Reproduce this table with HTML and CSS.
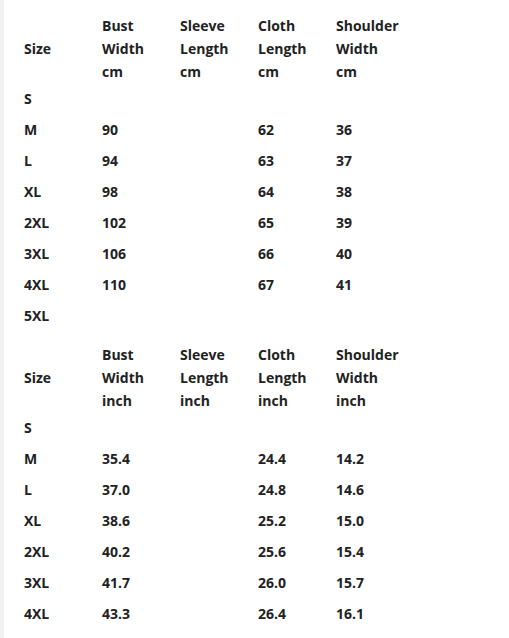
FILE: index.html
```html
<!DOCTYPE html>
<html>
<head>
<meta charset="utf-8">
<link rel="stylesheet" href="styles.css">
</head>
<body>
<div class="page">
  <table class="sizes">
    <colgroup><col class="c"><col class="c"><col class="c"><col class="c"><col class="c"></colgroup>
    <thead>
      <tr><th>Size</th><th>Bust<br>Width<br>cm</th><th>Sleeve<br>Length<br>cm</th><th>Cloth<br>Length<br>cm</th><th>Shoulder<br>Width<br>cm</th></tr>
    </thead>
    <tbody>
      <tr><td>S</td><td></td><td></td><td></td><td></td></tr>
      <tr><td>M</td><td>90</td><td></td><td>62</td><td>36</td></tr>
      <tr><td>L</td><td>94</td><td></td><td>63</td><td>37</td></tr>
      <tr><td>XL</td><td>98</td><td></td><td>64</td><td>38</td></tr>
      <tr><td>2XL</td><td>102</td><td></td><td>65</td><td>39</td></tr>
      <tr><td>3XL</td><td>106</td><td></td><td>66</td><td>40</td></tr>
      <tr><td>4XL</td><td>110</td><td></td><td>67</td><td>41</td></tr>
      <tr><td>5XL</td><td></td><td></td><td></td><td></td></tr>
    </tbody>
  </table>
  <table class="sizes second">
    <colgroup><col class="c"><col class="c"><col class="c"><col class="c"><col class="c"></colgroup>
    <thead>
      <tr><th>Size</th><th>Bust<br>Width<br>inch</th><th>Sleeve<br>Length<br>inch</th><th>Cloth<br>Length<br>inch</th><th>Shoulder<br>Width<br>inch</th></tr>
    </thead>
    <tbody>
      <tr><td>S</td><td></td><td></td><td></td><td></td></tr>
      <tr><td>M</td><td>35.4</td><td></td><td>24.4</td><td>14.2</td></tr>
      <tr><td>L</td><td>37.0</td><td></td><td>24.8</td><td>14.6</td></tr>
      <tr><td>XL</td><td>38.6</td><td></td><td>25.2</td><td>15.0</td></tr>
      <tr><td>2XL</td><td>40.2</td><td></td><td>25.6</td><td>15.4</td></tr>
      <tr><td>3XL</td><td>41.7</td><td></td><td>26.0</td><td>15.7</td></tr>
      <tr><td>4XL</td><td>43.3</td><td></td><td>26.4</td><td>16.1</td></tr>
    </tbody>
  </table>
</div>
</body>
</html>
```
FILE: styles.css
```css
html, body {
  margin: 0;
  padding: 0;
  background: #ffffff;
}
.page {
  border-left: 4px solid #f1f1f1;
  min-height: 100vh;
  box-sizing: border-box;
  font-family: "Open Sans", "Liberation Sans", sans-serif;
  font-size: 14px;
  color: #222222;
}
.sizes {
  border-collapse: collapse;
  table-layout: fixed;
  margin-left: 20px;
}
.sizes .c {
  width: 78px;
}
.sizes th,
.sizes td {
  padding: 0;
  text-align: left;
  font-weight: 700;
  white-space: nowrap;
}
.sizes th {
  line-height: 23px;
  padding-top: 14px;
  vertical-align: middle;
}
.sizes td {
  line-height: 23px;
  padding-top: 4px;
  padding-bottom: 4px;
}
.second {
  margin-top: -2px;
}
```
